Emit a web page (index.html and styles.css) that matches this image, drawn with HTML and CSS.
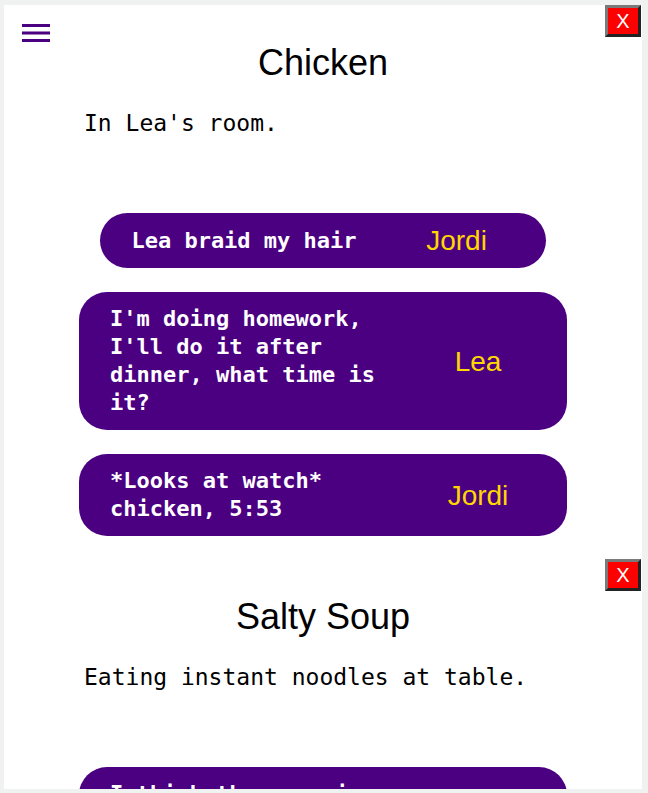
FILE: index.html
```html
<!DOCTYPE html>
<html lang="en">
<head>
<meta charset="utf-8">
<title>Scenes</title>
<link rel="stylesheet" href="styles.css">
</head>
<body>
<div class="app">
  <button class="menu" aria-label="Menu">
    <svg width="28" height="18" viewBox="0 0 28 18"><rect x="0" y="0" width="28" height="3"/><rect x="0" y="7.5" width="28" height="3"/><rect x="0" y="15" width="28" height="3"/></svg>
  </button>

  <section class="card">
    <div class="card-top"><button class="close">X</button></div>
    <h2 class="title">Chicken</h2>
    <p class="desc">In Lea's room.</p>
    <div class="lines">
      <div class="bubble"><span class="say">Lea braid my hair</span><span class="who">Jordi</span></div>
      <div class="bubble"><span class="say">I'm doing homework, I'll do it after dinner, what time is it?</span><span class="who">Lea</span></div>
      <div class="bubble"><span class="say">*Looks at watch* chicken, 5:53</span><span class="who">Jordi</span></div>
    </div>
  </section>

  <section class="card">
    <div class="card-top"><button class="close">X</button></div>
    <h2 class="title">Salty Soup</h2>
    <p class="desc">Eating instant noodles at table.</p>
    <div class="lines">
      <div class="bubble"><span class="say">I think the soup is too salty</span><span class="who">Lea</span></div>
    </div>
  </section>
</div>
</body>
</html>
```

FILE: styles.css
```css
html, body {
  margin: 0;
  height: 100%;
}
body {
  background: #f0f1f1;
  padding: 5px 6px 4px 4px;
  box-sizing: border-box;
  font-family: "Liberation Sans", Arial, sans-serif;
}
.app {
  position: relative;
  background: #ffffff;
  height: 784px;
  overflow: hidden;
  display: flex;
  flex-direction: column;
  gap: 23px;
}
.menu {
  position: absolute;
  left: 18px;
  top: 19px;
  padding: 0;
  margin: 0;
  border: none;
  background: transparent;
  width: 28px;
  height: 18px;
  fill: #4b0082;
  line-height: 0;
}
.card {
  display: flex;
  flex-direction: column;
}
.card-top {
  display: flex;
  justify-content: flex-end;
}
.close {
  width: 36px;
  height: 32px;
  margin: 0 1px 0 0;
  padding: 0;
  background: #ff0000;
  color: #ffffff;
  font-family: "Liberation Sans", Arial, sans-serif;
  font-size: 20px;
  line-height: 1;
  border: 3px solid;
  border-color: #7a7a7a #222222 #222222 #7a7a7a;
  box-sizing: border-box;
}
.title {
  margin: 5px 0 0;
  font-weight: normal;
  font-size: 36px;
  line-height: 41px;
  text-align: center;
  color: #000;
}
.desc {
  margin: 27px 0 0;
  padding-left: 80px;
  font-family: "DejaVu Sans Mono", monospace;
  font-size: 23px;
  color: #000;
}
.lines {
  margin-top: 77px;
  display: flex;
  flex-direction: column;
  align-items: center;
  gap: 24px;
}
.bubble {
  display: flex;
  align-items: center;
  gap: 42px;
  padding: 13px 31px;
  background: #4b0082;
  border-radius: 28px;
}
.say {
  max-width: 268px;
  font-family: "DejaVu Sans Mono", monospace;
  font-weight: bold;
  font-size: 22px;
  line-height: 28px;
  color: #ffffff;
}
.who {
  width: 116px;
  text-align: center;
  font-family: "Liberation Sans", Arial, sans-serif;
  font-size: 28px;
  line-height: 29px;
  color: #ffd700;
}
```
